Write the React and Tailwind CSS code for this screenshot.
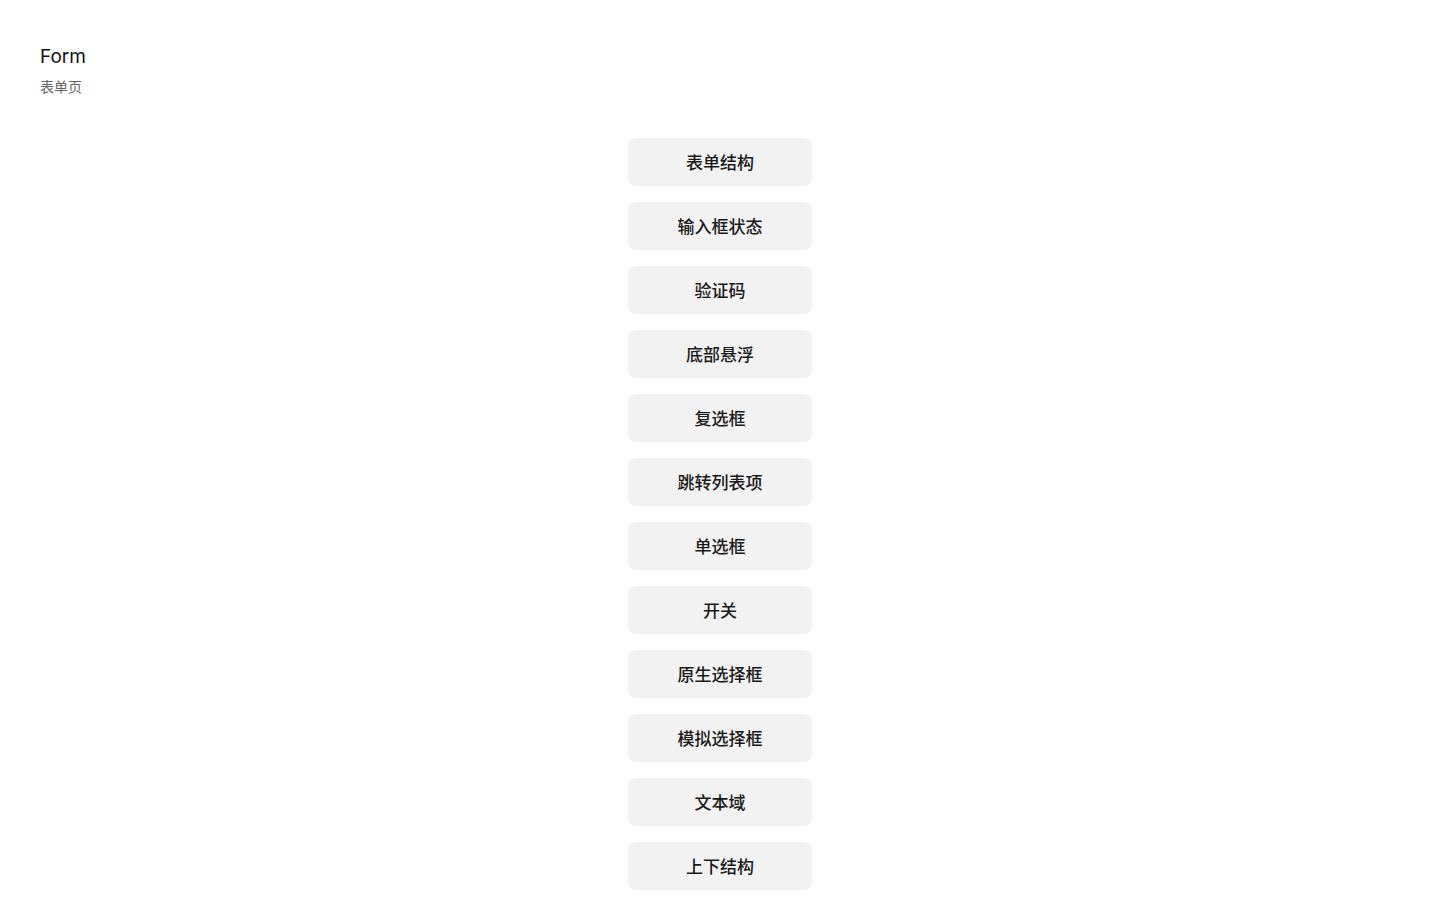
import React from 'react';

const items = [
  '表单结构',
  '输入框状态',
  '验证码',
  '底部悬浮',
  '复选框',
  '跳转列表项',
  '单选框',
  '开关',
  '原生选择框',
  '模拟选择框',
  '文本域',
  '上下结构',
];

const App = () => {
  return (
    <div className="min-h-screen bg-white font-['Inter','Noto_Sans_CJK_SC',sans-serif]">
      <header className="px-10 pt-[43px]">
        <h1 className="text-[19px] leading-7 text-[#111]">Form</h1>
        <p className="mt-[5px] text-sm leading-5 text-[#666] font-['Noto_Sans_CJK_SC',sans-serif]">表单页</p>
      </header>

      <div className="mt-[42px] flex flex-col items-center gap-4 pb-10">
        {items.map((item) => (
          <button
            key={item}
            className="w-[184px] h-12 rounded-lg bg-[#f2f2f2] pb-px text-[17px] font-medium text-[#1a1a1a] font-['Noto_Sans_CJK_SC',sans-serif]"
          >
            {item}
          </button>
        ))}
      </div>
    </div>
  );
};

export default App;
